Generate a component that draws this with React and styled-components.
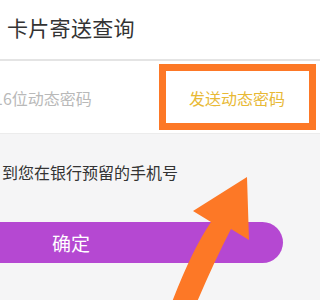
import React from "react";
import styled, { createGlobalStyle } from "styled-components";

const Global = createGlobalStyle`
  html, body { margin: 0; padding: 0; background: #f5f5f6; }
  body { font-family: "Noto Sans CJK SC", "Noto Sans", sans-serif; overflow: hidden; }
`;

const Page = styled.div`
  position: relative;
  width: 320px;
  height: 300px;
  overflow: hidden;
  background: #f5f5f6;
`;

const Header = styled.div`
  display: flex;
  align-items: center;
  padding-left: 7px;
  background: #fff;
  border-bottom: 2px solid #e4e4e4;
  box-sizing: border-box;
  height: 61px;
`;

const Title = styled.div`
  font-size: 21px;
  color: #333;
  letter-spacing: 0.3px;
  line-height: 1;
  margin-top: -4px;
`;

const InputRow = styled.div`
  height: 72px;
  background: #fff;
  display: flex;
  align-items: center;
  justify-content: space-between;
  border-bottom: 1px solid #ececec;
`;

const Placeholder = styled.div`
  font-size: 16px;
  color: #b9b9b9;
  margin-left: -6px;
  line-height: 1;
  margin-top: 2px;
`;

const SendCode = styled.div`
  font-size: 16px;
  color: #e8b935;
  width: 130px;
  margin-right: 35px;
  text-align: right;
  line-height: 1;
  margin-top: 2px;
`;

const Hint = styled.div`
  font-size: 16px;
  color: #333;
  padding-left: 2px;
  margin-top: 30px;
  line-height: 16px;
`;

const Confirm = styled.div`
  margin-top: 42px;
  margin-left: -140px;
  width: 423px;
  height: 41px;
  border-radius: 21px;
  background: #b548d2;
  display: flex;
  align-items: center;
  padding-left: 192px;
  box-sizing: border-box;
  color: #fff;
  font-size: 19px;
`;

const Highlight = styled.div`
  position: absolute;
  left: 159px;
  top: 64px;
  width: 157px;
  height: 66px;
  border: 7px solid #fd7826;
  box-sizing: border-box;
  pointer-events: none;
`;

const Arrow = styled.svg`
  position: absolute;
  left: 0;
  top: 0;
  pointer-events: none;
`;

export default function App() {
  return (
    <Page>
      <Global />
      <Header>
        <Title>卡片寄送查询</Title>
      </Header>
      <InputRow>
        <Placeholder>16位动态密码</Placeholder>
        <SendCode>发送动态密码</SendCode>
      </InputRow>
      <Hint>到您在银行预留的手机号</Hint>
      <Confirm>确定</Confirm>
      <Highlight />
      <Arrow width="320" height="300" viewBox="0 0 320 300">
        <path
          d="M247 177 L249 240 L231 229 Q214 262 197 302 L172 302 Q192 250 211 222 L193 211 Z"
          fill="#fd7826"
        />
      </Arrow>
    </Page>
  );
}
